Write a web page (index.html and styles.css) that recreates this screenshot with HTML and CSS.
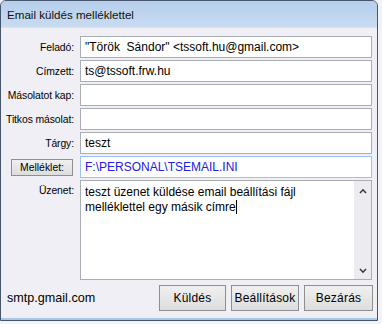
FILE: index.html
```html
<!DOCTYPE html>
<html lang="hu">
<head>
<meta charset="utf-8">
<title>Email küldés melléklettel</title>
<link rel="stylesheet" href="styles.css">
</head>
<body>
<div class="win">
  <div class="title">Email küldés melléklettel</div>
  <div class="client">
    <div class="form">
      <div class="lbl">Feladó:</div>
      <div class="inp">"Török&nbsp; Sándor" &lt;tssoft.hu@gmail.com&gt;</div>
      <div class="lbl">Címzett:</div>
      <div class="inp">ts@tssoft.frw.hu</div>
      <div class="lbl">Másolatot kap:</div>
      <div class="inp"></div>
      <div class="lbl">Titkos másolat:</div>
      <div class="inp"></div>
      <div class="lbl">Tárgy:</div>
      <div class="inp">teszt</div>
      <div class="lbl"><button class="btn btn-small">Melléklet:</button></div>
      <div class="inp inp-blue">F:\PERSONAL\TSEMAIL.INI</div>
      <div class="lbl lbl-top">Üzenet:</div>
      <div class="memo">
        <div class="memo-text">teszt üzenet küldése email beállítási fájl melléklettel egy másik címre<span class="caret"></span></div>
        <div class="sb">
          <svg class="arr" width="8" height="6" viewBox="0 0 8 6"><polyline points="1,5 4,1.8 7,5" fill="none" stroke="#3a3a3a" stroke-width="1.6"/></svg>
          <svg class="arr" width="8" height="6" viewBox="0 0 8 6"><polyline points="1,1 4,4.2 7,1" fill="none" stroke="#3a3a3a" stroke-width="1.6"/></svg>
        </div>
      </div>
    </div>
    <div class="footer">
      <span class="status">smtp.gmail.com</span>
      <div class="btns">
        <button class="btn btn-k">Küldés</button>
        <button class="btn btn-b">Beállítások</button>
        <button class="btn btn-z">Bezárás</button>
      </div>
    </div>
  </div>
</div>
</body>
</html>
```

FILE: styles.css
```css
html, body {
  margin: 0;
  padding: 0;
}
body {
  width: 382px;
  height: 324px;
  background: #f3f3f7;
  font-family: "Liberation Sans", Arial, sans-serif;
  color: #000;
  overflow: hidden;
}
.win {
  box-sizing: border-box;
  width: 378px;
  height: 321px;
  border: 1px solid #46566a;
  border-radius: 6px 6px 0 0;
  background: #c3d6ee;
  display: flex;
  flex-direction: column;
  overflow: hidden;
}
.title {
  height: 26px;
  box-sizing: border-box;
  padding: 6px 0 0 6px;
  font-size: 11.6px;
  line-height: 16px;
  color: #101010;
  background: linear-gradient(#b6cfec, #c9dbf1);
}
.client {
  flex: 1;
  background: #f0eff5;
  border-top: 1px solid #d6e2f0;
  border-bottom: 2px solid #a9c6e8;
  padding: 8px 4px 0 3px;
  display: flex;
  flex-direction: column;
}
.form {
  display: grid;
  grid-template-columns: 72px 292px;
  grid-template-rows: repeat(6, 22px) 100px;
  column-gap: 4px;
  row-gap: 2px;
}
.lbl {
  font-size: 10.4px;
  letter-spacing: -0.1px;
  display: flex;
  align-items: center;
  justify-content: flex-end;
  padding-right: 2px;
  white-space: nowrap;
}
.lbl-top {
  align-items: flex-start;
  padding-top: 5px;
}
.inp {
  box-sizing: border-box;
  border: 1px solid #a9adb4;
  background: #fff;
  font-size: 12px;
  line-height: 20px;
  padding-left: 4px;
  white-space: nowrap;
  overflow: hidden;
}
.inp-blue {
  border-color: #9cc1ea;
  color: #2020e4;
}
.memo {
  box-sizing: border-box;
  border: 1px solid #a9adb4;
  background: #fff;
  display: flex;
}
.memo-text {
  flex: 1;
  font-size: 12px;
  line-height: 15px;
  padding: 4px 4px 0 4px;
}
.caret {
  display: inline-block;
  width: 0;
  height: 14px;
  border-left: 1px solid #000;
  vertical-align: -3px;
}
.sb {
  width: 17px;
  background: #ecebf0;
  display: flex;
  flex-direction: column;
  justify-content: space-between;
  align-items: center;
  padding: 7px 0 5px;
}
.arr {
  display: block;
}
.footer {
  display: flex;
  align-items: center;
  justify-content: space-between;
  margin-top: 5px;
  padding-left: 3px;
}
.status {
  font-size: 12.6px;
}
.btns {
  display: flex;
  gap: 5px;
}
.btn {
  box-sizing: border-box;
  height: 26px;
  border: 1px solid #8f8f8f;
  background: linear-gradient(#f0f0f0, #dddddd);
  font-family: "Liberation Sans", Arial, sans-serif;
  font-size: 12px;
  letter-spacing: 0.2px;
  color: #000;
  padding: 0;
  margin: 0;
}
.btn-k { width: 67px; }
.btn-b { width: 68px; }
.btn-z { width: 69px; }
.btn-small {
  width: 62px;
  height: 17px;
  font-size: 10.4px;
  letter-spacing: 0;
  margin-right: 1px;
}
```
